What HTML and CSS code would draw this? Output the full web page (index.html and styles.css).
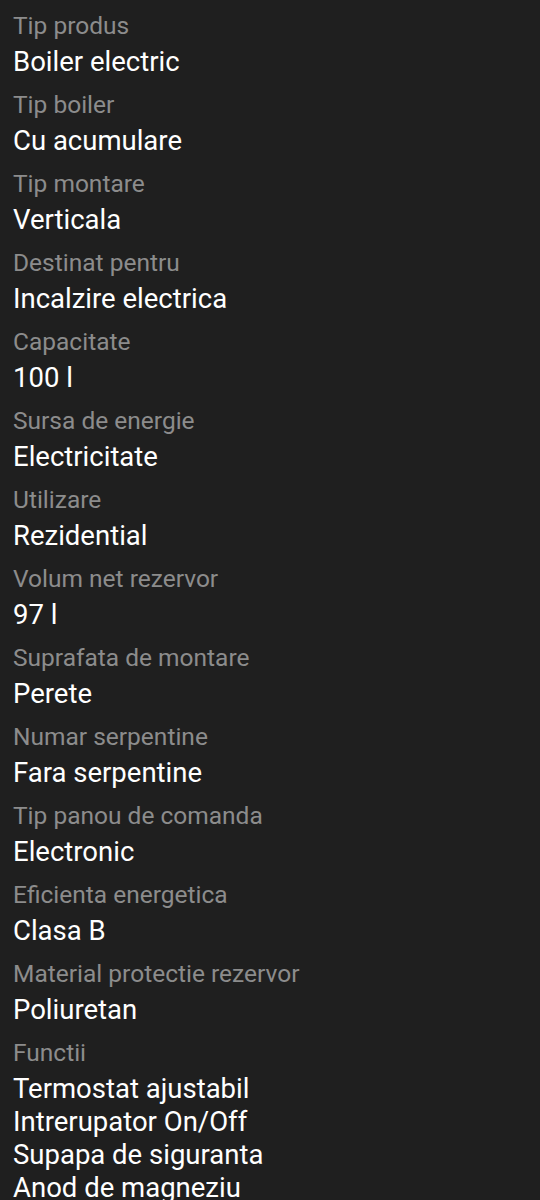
FILE: index.html
```html
<!DOCTYPE html>
<html lang="ro">
<head>
    <meta charset="UTF-8">
    <meta name="viewport" content="width=device-width, initial-scale=1.0">
    <title>Specificatii</title>
    <link rel="stylesheet" href="styles.css">
</head>
<body>
    <div class="specs">
        <div class="spec">
            <div class="spec-label">Tip produs</div>
            <div class="spec-value">Boiler electric</div>
        </div>
        <div class="spec">
            <div class="spec-label">Tip boiler</div>
            <div class="spec-value">Cu acumulare</div>
        </div>
        <div class="spec">
            <div class="spec-label">Tip montare</div>
            <div class="spec-value">Verticala</div>
        </div>
        <div class="spec">
            <div class="spec-label">Destinat pentru</div>
            <div class="spec-value">Incalzire electrica</div>
        </div>
        <div class="spec">
            <div class="spec-label">Capacitate</div>
            <div class="spec-value">100 l</div>
        </div>
        <div class="spec">
            <div class="spec-label">Sursa de energie</div>
            <div class="spec-value">Electricitate</div>
        </div>
        <div class="spec">
            <div class="spec-label">Utilizare</div>
            <div class="spec-value">Rezidential</div>
        </div>
        <div class="spec">
            <div class="spec-label">Volum net rezervor</div>
            <div class="spec-value">97 l</div>
        </div>
        <div class="spec">
            <div class="spec-label">Suprafata de montare</div>
            <div class="spec-value">Perete</div>
        </div>
        <div class="spec">
            <div class="spec-label">Numar serpentine</div>
            <div class="spec-value">Fara serpentine</div>
        </div>
        <div class="spec">
            <div class="spec-label">Tip panou de comanda</div>
            <div class="spec-value">Electronic</div>
        </div>
        <div class="spec">
            <div class="spec-label">Eficienta energetica</div>
            <div class="spec-value">Clasa B</div>
        </div>
        <div class="spec">
            <div class="spec-label">Material protectie rezervor</div>
            <div class="spec-value">Poliuretan</div>
        </div>
        <div class="spec">
            <div class="spec-label">Functii</div>
            <div class="spec-value">Termostat ajustabil<br>Intrerupator On/Off<br>Supapa de siguranta<br>Anod de magneziu</div>
        </div>
    </div>
</body>
</html>
```

FILE: styles.css
```css
body {
    margin: 0;
    background-color: #1f1f1f;
    font-family: Roboto, "Noto Sans", sans-serif;
    height: 1200px;
    overflow: hidden;
}

.specs {
    display: flex;
    flex-direction: column;
    gap: 13px;
    padding: 12px 13px 0;
}

.spec {
    display: flex;
    flex-direction: column;
    gap: 5px;
}

.spec-label {
    font-size: 24.5px;
    line-height: 28px;
    color: #8c8c8c;
}

.spec-value {
    font-size: 27.5px;
    line-height: 33px;
    color: #ffffff;
}
```
